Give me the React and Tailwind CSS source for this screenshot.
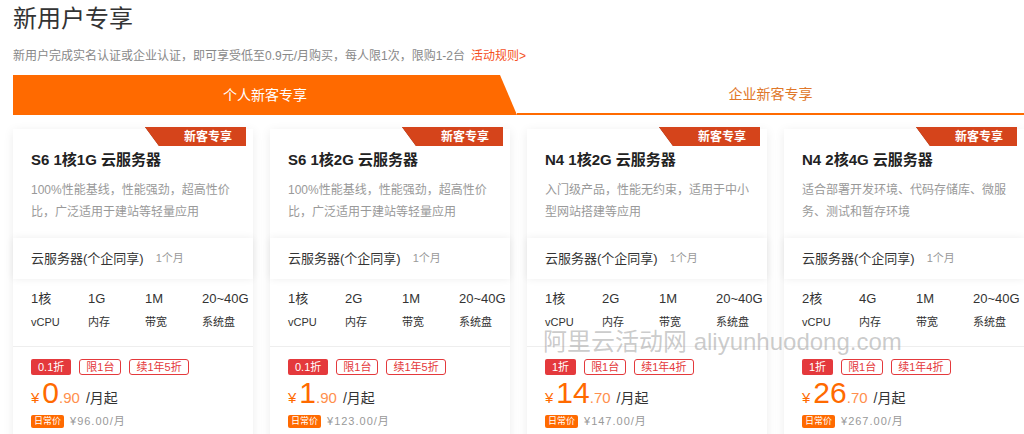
import React from 'react';

const cards = [
  {
    title: 'S6 1核1G 云服务器',
    desc: '100%性能基线，性能强劲，超高性价比，广泛适用于建站等轻量应用',
    specs: [['1核', 'vCPU'], ['1G', '内存'], ['1M', '带宽'], ['20~40G', '系统盘']],
    tags: ['0.1折', '限1台', '续1年5折'],
    int: '0',
    dec: '.90',
    orig: '¥96.00/月',
  },
  {
    title: 'S6 1核2G 云服务器',
    desc: '100%性能基线，性能强劲，超高性价比，广泛适用于建站等轻量应用',
    specs: [['1核', 'vCPU'], ['2G', '内存'], ['1M', '带宽'], ['20~40G', '系统盘']],
    tags: ['0.1折', '限1台', '续1年5折'],
    int: '1',
    dec: '.90',
    orig: '¥123.00/月',
  },
  {
    title: 'N4 1核2G 云服务器',
    desc: '入门级产品，性能无约束，适用于中小型网站搭建等应用',
    specs: [['1核', 'vCPU'], ['2G', '内存'], ['1M', '带宽'], ['20~40G', '系统盘']],
    tags: ['1折', '限1台', '续1年4折'],
    int: '14',
    dec: '.70',
    orig: '¥147.00/月',
  },
  {
    title: 'N4 2核4G 云服务器',
    desc: '适合部署开发环境、代码存储库、微服务、测试和暂存环境',
    specs: [['2核', 'vCPU'], ['4G', '内存'], ['1M', '带宽'], ['20~40G', '系统盘']],
    tags: ['1折', '限1台', '续1年4折'],
    int: '26',
    dec: '.70',
    orig: '¥267.00/月',
  },
];

const font = { fontFamily: '"Liberation Sans", "Noto Sans CJK SC", sans-serif' };

const Card = ({ card }) => (
  <div className="relative w-[240px] shrink-0 bg-white shadow-[0_2px_10px_rgba(0,0,0,0.08)]">
    {/* ribbon badge */}
    <div className="absolute right-[7px] -top-[2px] h-[19px] w-[101px]">
      <div className="absolute left-0 top-0 h-[19px] w-[14px] bg-[#7a2a12] [clip-path:polygon(0_0,100%_0,100%_100%)]" />
      <div className="absolute inset-0 bg-[#d5441b] [clip-path:polygon(0_0,100%_0,100%_100%,14px_100%)] flex items-center justify-end pr-[14px]">
        <span className="text-[12px] font-bold text-white leading-none">新客专享</span>
      </div>
    </div>

    <div className="px-[18px] pt-[22px] pb-[15px]">
      <h3 className="text-[15px] font-bold text-[#222] leading-[18px]">{card.title}</h3>
      <p className="mt-[10px] text-[12px] leading-[22px] text-[#999] h-[44px]">{card.desc}</p>
    </div>

    <div className="flex items-center h-[41px] px-[18px] bg-white shadow-[0_0_8px_rgba(0,0,0,0.07)]">
      <span className="text-[13px] text-[#333]">云服务器(个企同享)</span>
      <span className="ml-3 text-[11px] text-[#999]">1个月</span>
    </div>

    <div className="flex px-[18px] pt-[11px] pb-[17px] border-b border-[#eee]">
      {card.specs.map(([v, l]) => (
        <div key={l} className="w-[57px] shrink-0 last:w-auto">
          <div className="text-[13px] leading-[18px] text-[#333]">{v}</div>
          <div className="mt-[7px] text-[11px] leading-[14px] text-[#333]">{l}</div>
        </div>
      ))}
    </div>

    <div className="px-[18px] pt-[12px]">
      <div className="flex gap-[8px]">
        {card.tags.map((t, i) =>
          i === 0 ? (
            <span key={t} className="h-[16px] px-[7px] rounded-[2px] bg-[#e4393c] text-white text-[11px] leading-[16px]">{t}</span>
          ) : (
            <span key={t} className="h-[16px] px-[6px] rounded-[3px] border border-[#e4393c] text-[#e4393c] text-[11px] leading-[14px]">{t}</span>
          )
        )}
      </div>
      <div className="flex items-baseline mt-[3px] h-[30px]">
        <span className="text-[15px] text-[#ff6a00] mr-[3px]">¥</span>
        <span className="text-[30px] leading-[30px] text-[#ff6a00]">{card.int}</span>
        <span className="text-[15px] text-[#ff8f4d]">{card.dec}</span>
        <span className="ml-[6px] text-[14px] text-[#333]">/月起</span>
      </div>
      <div className="flex items-center mt-[5px] gap-[6px]">
        <span className="h-[13px] px-[3px] rounded-[2px] bg-[#ff6a00] text-white text-[9px] leading-[13px]">日常价</span>
        <span className="text-[11px] text-[#999] tracking-[1px]">{card.orig}</span>
      </div>
    </div>
    <div className="h-[20px]" />
  </div>
);

export default function App() {
  return (
    <div className="relative w-[1024px] h-[434px] overflow-hidden bg-white" style={font}>
      <div className="pl-[13px]">
        <h1 className="pt-[4px] text-[24px] leading-[30px] text-[#333]">新用户专享</h1>
        <p className="mt-[14px] text-[12px] leading-[16px] text-[#888]">
          新用户完成实名认证或企业认证，即可享受低至0.9元/月购买，每人限1次，限购1-2台
          <span className="ml-[6px] text-[#f5501e]">活动规则&gt;</span>
        </p>

        <div className="mt-[11px] flex h-[40px]">
          <div className="w-[504px] shrink-0 bg-[#ff6a00] [clip-path:polygon(0_0,487px_0,100%_100%,0_100%)] flex items-center justify-center">
            <span className="text-[14px] text-white">个人新客专享</span>
          </div>
          <div className="flex-1 flex items-center justify-center border-b-2 border-[#ff6a00]">
            <span className="text-[14px] text-[#e0782a]">企业新客专享</span>
          </div>
        </div>

        <div className="mt-[14px] flex gap-[17px]">
          {cards.map((c) => (
            <Card key={c.title} card={c} />
          ))}
        </div>
      </div>

      <div className="absolute left-[543px] top-[327px] text-[24px] leading-[30px] text-[rgba(140,140,140,0.45)] whitespace-nowrap pointer-events-none">
        阿里云活动网 aliyunhuodong.com
      </div>
    </div>
  );
}
